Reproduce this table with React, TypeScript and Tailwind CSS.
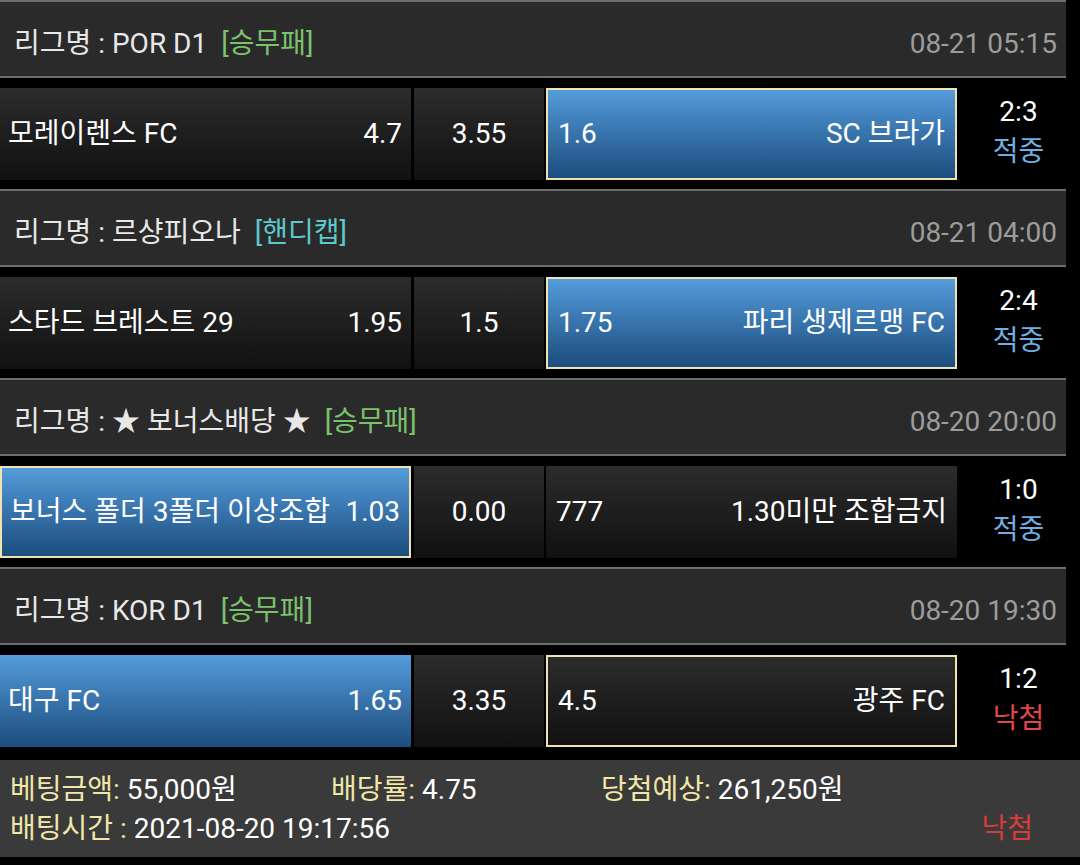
import React from 'react';

type Cell = { name: string; odds: string; blue?: boolean; picked?: boolean };

interface Match {
  league: string;
  type: string;
  typeColor: string;
  time: string;
  home: Cell;
  draw: string;
  away: Cell;
  score: string;
  result: 'hit' | 'miss';
}

const matches: Match[] = [
  {
    league: 'POR D1',
    type: '[승무패]',
    typeColor: 'text-[#7cc26c]',
    time: '08-21 05:15',
    home: { name: '모레이렌스 FC', odds: '4.7' },
    draw: '3.55',
    away: { name: 'SC 브라가', odds: '1.6', blue: true, picked: true },
    score: '2:3',
    result: 'hit',
  },
  {
    league: '르샹피오나',
    type: '[핸디캡]',
    typeColor: 'text-[#5cc9cc]',
    time: '08-21 04:00',
    home: { name: '스타드 브레스트 29', odds: '1.95' },
    draw: '1.5',
    away: { name: '파리 생제르맹 FC', odds: '1.75', blue: true, picked: true },
    score: '2:4',
    result: 'hit',
  },
  {
    league: '★ 보너스배당 ★',
    type: '[승무패]',
    typeColor: 'text-[#7cc26c]',
    time: '08-20 20:00',
    home: { name: '보너스 폴더 3폴더 이상조합', odds: '1.03', blue: true, picked: true },
    draw: '0.00',
    away: { name: '1.30미만 조합금지', odds: '777' },
    score: '1:0',
    result: 'hit',
  },
  {
    league: 'KOR D1',
    type: '[승무패]',
    typeColor: 'text-[#7cc26c]',
    time: '08-20 19:30',
    home: { name: '대구 FC', odds: '1.65', blue: true },
    draw: '3.35',
    away: { name: '광주 FC', odds: '4.5', picked: true },
    score: '1:2',
    result: 'miss',
  },
];

function cellBg(cell: Cell) {
  const bg = cell.blue
    ? 'bg-gradient-to-b from-[#549cdb] to-[#1c4d7e]'
    : 'bg-gradient-to-b from-[#2c2c2c] to-[#111111]';
  const border = cell.picked ? 'border-2 border-[#f1e2b0]' : '';
  return `${bg} ${border}`;
}

function MatchBlock({ m }: { m: Match }) {
  return (
    <div className="mb-[9px]">
      {/* league header */}
      <div className="w-[1066px] h-[78px] bg-[#2a2a2a] border-y-2 border-[#6e6e6e] flex items-center justify-between pl-[14px] pr-[9px] pt-[9px]">
        <div className="flex items-center text-[#e8e8e8]">
          <span>리그명 : {m.league}</span>
          <span className={`ml-[14px] ${m.typeColor}`}>{m.type}</span>
        </div>
        <span className="text-[#9c9c9c]">{m.time}</span>
      </div>

      {/* odds row */}
      <div className="mt-[10px] flex h-[92px]">
        <div className={`w-[411px] flex items-center justify-between pl-2 pr-[9px] text-white ${cellBg(m.home)}`}>
          <span className="whitespace-nowrap">{m.home.name}</span>
          <span>{m.home.odds}</span>
        </div>
        <div className="ml-[3px] w-[130px] flex items-center justify-center text-white bg-gradient-to-b from-[#2c2c2c] to-[#111111]">
          {m.draw}
        </div>
        <div className={`ml-[2px] w-[411px] flex items-center justify-between px-[10px] text-white ${cellBg(m.away)}`}>
          <span>{m.away.odds}</span>
          <span className="whitespace-nowrap">{m.away.name}</span>
        </div>
        <div className="flex-1 flex flex-col items-center justify-center leading-[40px] pb-[5px]">
          <span className="text-white">{m.score}</span>
          <span className={m.result === 'hit' ? 'text-[#72aee2]' : 'text-[#e2474b]'}>
            {m.result === 'hit' ? '적중' : '낙첨'}
          </span>
        </div>
      </div>
    </div>
  );
}

export default function App() {
  return (
    <div className="w-[1080px] h-[865px] bg-black overflow-hidden text-[28px] font-[Roboto,'Noto_Sans_CJK_KR',sans-serif]">
      {matches.map((m, i) => (
        <MatchBlock key={i} m={m} />
      ))}

      {/* bet summary */}
      <div className="mt-[13px] h-[97px] bg-[#3a3a3a] pl-[10px] pr-[47px] flex flex-col justify-center leading-[39px]">
        <div className="flex">
          <span className="w-[321px]">
            <span className="text-[#f0e7a8]">베팅금액:</span> <span className="text-white">55,000원</span>
          </span>
          <span className="w-[270px]">
            <span className="text-[#f0e7a8]">배당률:</span> <span className="text-white">4.75</span>
          </span>
          <span>
            <span className="text-[#f0e7a8]">당첨예상:</span> <span className="text-white">261,250원</span>
          </span>
        </div>
        <div className="flex justify-between">
          <span>
            <span className="text-[#f0e7a8]">배팅시간 :</span> <span className="text-white">2021-08-20 19:17:56</span>
          </span>
          <span className="text-[#d93a3a]">낙첨</span>
        </div>
      </div>
    </div>
  );
}
